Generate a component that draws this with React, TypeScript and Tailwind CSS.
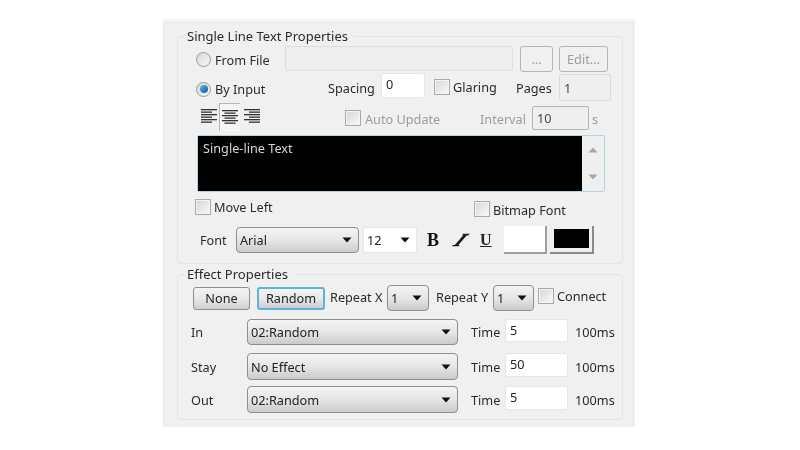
import type { ReactNode } from 'react';

function Caret() {
  return (
    <svg width="10" height="6" viewBox="0 0 10 6" className="shrink-0">
      <path d="M0.5 0.5H9.5L5 5.5Z" fill="#111" />
    </svg>
  );
}

function Label({ w, ml = 0, mt = 0, gray, children }: { w: number; ml?: number; mt?: number; gray?: boolean; children: ReactNode }) {
  return (
    <span
      className={`shrink-0 whitespace-nowrap ${gray ? 'text-[#9c9c9c]' : 'text-[#2a2a2a]'}`}
      style={{ width: w, marginLeft: ml, marginTop: mt }}
    >
      {children}
    </span>
  );
}

function Check({ ml = 0, mt = 0 }: { ml?: number; mt?: number }) {
  return (
    <span
      className="h-[16px] w-[16px] shrink-0 border border-[#a9a9a9] bg-gradient-to-br from-[#d6d6d6] to-[#fafafa] shadow-[inset_0_0_0_1px_#f4f4f4]"
      style={{ marginLeft: ml, marginTop: mt }}
    />
  );
}

function Radio({ on, mt = 0 }: { on?: boolean; mt?: number }) {
  return (
    <span
      className="ml-[18px] flex h-[15px] w-[15px] shrink-0 items-center justify-center rounded-full border border-[#9a9a9a] bg-gradient-to-br from-[#d4d4d4] to-[#fafafa]"
      style={{ marginTop: mt }}
    >
      {on && <span className="h-[8px] w-[8px] rounded-full bg-gradient-to-br from-[#5fb6e6] to-[#0b5c9c]" />}
    </span>
  );
}

function Field({ w, h, ml = 0, mt = 0, value, disabled, framed }: { w: number; h: number; ml?: number; mt?: number; value?: string; disabled?: boolean; framed?: boolean }) {
  const look = disabled
    ? `items-center bg-[#efefef] text-[#444] ${framed ? 'border border-[#b5b5b5]' : 'border border-[#dcdcdc]'}`
    : 'items-start border border-[#e6e6e6] bg-white pt-[2px] text-[#222]';
  return (
    <span
      className={`flex shrink-0 rounded-[2px] pl-[4px] ${look}`}
      style={{ width: w, height: h, marginLeft: ml, marginTop: mt }}
    >
      {value}
    </span>
  );
}

function Select({ w, h, ml = 0, value, plain }: { w: number; h: number; ml?: number; value: string; plain?: boolean }) {
  return (
    <span
      className={`flex shrink-0 items-center justify-between pl-[3px] pr-[6px] text-[#222] ${plain ? 'rounded-[2px] border border-[#e6e6e6] bg-white' : 'rounded-[4px] border border-[#8f8f8f] bg-gradient-to-b from-[#f4f4f4] via-[#e6e6e6] to-[#cbcbcb]'}`}
      style={{ width: w, height: h, marginLeft: ml }}
    >
      <span>{value}</span>
      <Caret />
    </span>
  );
}

function Btn({ w, ml = 0, focus, children }: { w: number; ml?: number; focus?: boolean; children: ReactNode }) {
  return (
    <span
      className={`flex h-[23px] shrink-0 items-center justify-center rounded-[3px] bg-gradient-to-b from-[#f4f4f4] via-[#e8e8e8] to-[#cfcfcf] text-[#222] ${focus ? 'border-2 border-[#5bb4dc]' : 'border border-[#8f8f8f]'}`}
      style={{ width: w, marginLeft: ml }}
    >
      {children}
    </span>
  );
}

function AlignIcon({ kind, ml = 0 }: { kind: 'left' | 'center' | 'right'; ml?: number }) {
  const rows = [16, 11, 16, 11, 16, 11];
  return (
    <svg width="16" height="16" viewBox="0 0 16 16" className="mt-[-2px] shrink-0" style={{ marginLeft: ml }}>
      {rows.map((len, i) => {
        const x = kind === 'left' ? 0 : kind === 'right' ? 16 - len : (16 - len) / 2;
        return <rect key={i} x={x} y={1 + i * 2.5} width={len} height="1.3" fill="#333" />;
      })}
    </svg>
  );
}

function Group({ title, titleW, h, mt = 0, children }: { title: string; titleW: number; h: number; mt?: number; children: ReactNode }) {
  return (
    <div
      className="relative ml-[13px] w-[446px] rounded-[4px] border border-[#dfe5ea]"
      style={{ height: h, marginTop: mt }}
    >
      <span
        className="absolute left-[6px] top-[-9px] bg-[#f0f0f0] px-[3px] text-[13px] leading-[17px] text-[#2a2a2a]"
        style={{ width: titleW }}
      >
        {title}
      </span>
      {children}
    </div>
  );
}

function EffectRow({ label, value, time, h, mt }: { label: string; value: string; time: string; h: number; mt: number }) {
  return (
    <div className="flex items-center" style={{ height: h, marginTop: mt }}>
      <Label w={56} ml={13}>{label}</Label>
      <Select w={211} h={h} value={value} />
      <Label w={30} ml={13}>Time</Label>
      <Field w={63} h={h - 3} ml={4} mt={-3} value={time} />
      <Label w={40} ml={7}>100ms</Label>
    </div>
  );
}

export default function App() {
  return (
    <div className="h-[450px] w-[800px] overflow-hidden bg-white pl-[163px] pt-[19px] font-['Noto_Sans',sans-serif] text-[12.7px] leading-[16px] blur-[0.35px]">
      <div className="h-[408px] w-[472px] bg-[#f5f5f5] pr-[1px] pt-[3px]">
        <div className="h-full rounded-tl-[3px] border border-b-0 border-[#e3e8ec] bg-[#f0f0f0] pt-[13px]">
          <Group title="Single Line Text Properties" titleW={170} h={228}>
            <div className="mt-[8px] flex h-[27px] items-center">
              <Radio mt={2} />
              <Label w={60} ml={4} mt={2}>From File</Label>
              <span className="ml-[10px] h-[25px] w-[228px] shrink-0 rounded-[2px] border border-[#dedede] bg-[#eeeeee]" />
              <span className="ml-[7px] flex h-[26px] w-[33px] shrink-0 items-center justify-center rounded-[3px] border border-[#b5b5b5] text-[#9c9c9c]">...</span>
              <span className="ml-[6px] flex h-[26px] w-[49px] shrink-0 items-center justify-center rounded-[3px] border border-[#b5b5b5] text-[#9c9c9c]">Edit...</span>
            </div>

            <div className="flex h-[30px] items-center">
              <Radio on mt={4} />
              <Label w={60} ml={4} mt={4}>By Input</Label>
              <Label w={47} ml={53} mt={2}>Spacing</Label>
              <Field w={44} h={25} ml={6} mt={-3} value="0" />
              <Check ml={9} mt={-1} />
              <Label w={46} ml={3}>Glaring</Label>
              <Label w={38} ml={17} mt={2}>Pages</Label>
              <Field w={52} h={27} ml={5} mt={1} value="1" disabled />
            </div>

            <div className="flex h-[30px] items-center">
              <span className="ml-[23px]" />
              <AlignIcon kind="left" />
              <span className="ml-[2px] flex h-[28px] w-[21px] shrink-0 items-center justify-center border-l border-t border-[#b5b5b5] bg-[#f6f6f6]">
                <AlignIcon kind="center" />
              </span>
              <AlignIcon kind="right" ml={4} />
              <Check ml={85} mt={2} />
              <Label w={78} ml={4} mt={3} gray>Auto Update</Label>
              <Label w={48} ml={37} mt={3} gray>Interval</Label>
              <Field w={57} h={24} ml={4} mt={1} value="10" disabled framed />
              <Label w={8} ml={3} mt={3} gray>s</Label>
            </div>

            <div className="ml-[19px] mt-[3px] flex h-[57px] w-[408px] rounded-[2px] border border-[#b4d2e6]">
              <div className="flex-1 bg-black pl-[5px] pt-[4px] text-[#d8d8d8]">Single-line Text</div>
              <div className="flex w-[22px] flex-col items-center justify-between bg-[#efefef] py-[11px]">
                <svg width="10" height="6" viewBox="0 0 10 6"><path d="M0.5 5.5H9.5L5 0.5Z" fill="#a8a8a8" /></svg>
                <svg width="10" height="6" viewBox="0 0 10 6"><path d="M0.5 0.5H9.5L5 5.5Z" fill="#a8a8a8" /></svg>
              </div>
            </div>

            <div className="mt-[4px] flex h-[20px] items-center">
              <Check ml={17} mt={1} />
              <Label w={62} ml={3} mt={1}>Move Left</Label>
              <Check ml={198} mt={5} />
              <Label w={74} ml={3} mt={7}>Bitmap Font</Label>
            </div>

            <div className="mt-[9px] flex h-[29px] items-center">
              <Label w={30} ml={22}>Font</Label>
              <Select w={123} h={26} ml={6} value="Arial" />
              <Select w={54} h={26} ml={4} value="12" plain />
              <span className="ml-[10px] w-[14px] shrink-0 font-['Liberation_Serif',serif] text-[18px] font-black text-[#111]">B</span>
              <span className="ml-[11px] w-[18px] shrink-0 -skew-x-[42deg] text-center font-['Liberation_Serif',serif] text-[18px] font-bold text-[#111] [-webkit-text-stroke:0.7px_#111]">I</span>
              <span className="ml-[10px] w-[14px] shrink-0 font-['Liberation_Serif',serif] text-[16px] font-bold text-[#222] underline">U</span>
              <span className="ml-[10px] h-[28px] w-[43px] shrink-0 border-b-2 border-r-2 border-[#a0a0a0] bg-white" />
              <span className="ml-[3px] flex h-[28px] w-[44px] shrink-0 items-center justify-center border-b-2 border-r-2 border-[#8a8a8a] bg-[#f0f0f0]">
                <span className="h-[19px] w-[35px] bg-black" />
              </span>
            </div>
          </Group>

          <Group title="Effect Properties" titleW={110} h={146} mt={10}>
            <div className="mt-[11px] flex h-[24px] items-center">
              <Btn w={57} ml={15}>None</Btn>
              <Btn w={68} ml={7} focus>Random</Btn>
              <Label w={57} ml={5} mt={-2}>Repeat X</Label>
              <Select w={42} h={26} value="1" />
              <Label w={57} ml={7} mt={-2}>Repeat Y</Label>
              <Select w={41} h={26} value="1" />
              <Check ml={4} mt={-5} />
              <Label w={50} ml={3} mt={-4}>Connect</Label>
            </div>
            <EffectRow label="In" value="02:Random" time="5" h={26} mt={9} />
            <EffectRow label="Stay" value="No Effect" time="50" h={27} mt={8} />
            <EffectRow label="Out" value="02:Random" time="5" h={27} mt={6} />
          </Group>
        </div>
      </div>
    </div>
  );
}
